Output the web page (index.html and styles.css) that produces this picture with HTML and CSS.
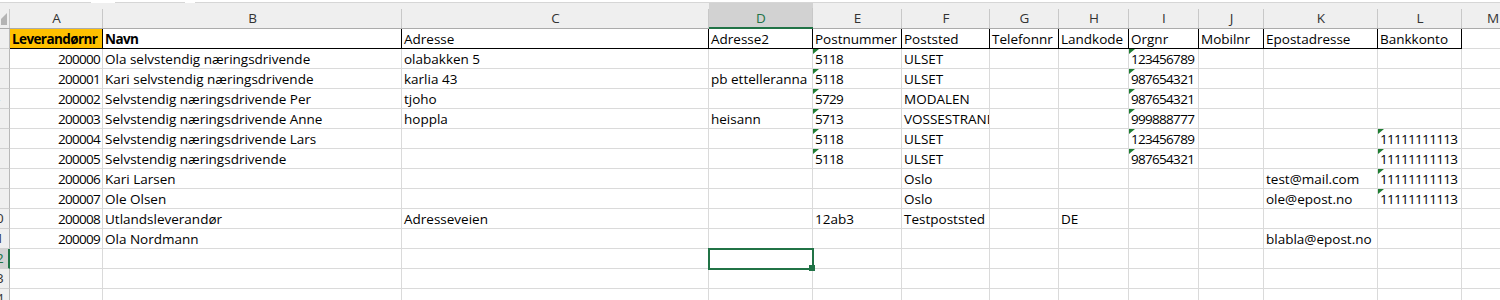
FILE: index.html
```html
<!DOCTYPE html>
<html lang="no">
<head>
  <meta charset="UTF-8">
  <title>Leverandører</title>
  <link rel="stylesheet" href="styles.css">
</head>
<body>
  <div class="topbar">
    <span class="seg s1"></span><span class="gap g1"></span><span class="seg s2"></span><span class="gap g2"></span><span class="seg s3"></span>
  </div>
  <div class="sheet">
    <div class="ch corner"><svg width="9" height="25" viewBox="0 0 9 25"><polygon points="6,10 6,22 -6,22" fill="#b4b4b4"/></svg></div>
    <div class="ch">A</div><div class="ch">B</div><div class="ch">C</div><div class="ch sel">D</div><div class="ch">E</div><div class="ch">F</div><div class="ch">G</div><div class="ch">H</div><div class="ch">I</div><div class="ch">J</div><div class="ch">K</div><div class="ch">L</div><div class="ch">M</div>

    <div class="rh"><span>1</span></div>
    <div class="c t fill b">Leverandørnr</div><div class="c t b">Navn</div><div class="c t">Adresse</div><div class="c t">Adresse2</div><div class="c t">Postnummer</div><div class="c t">Poststed</div><div class="c t">Telefonnr</div><div class="c t">Landkode</div><div class="c t">Orgnr</div><div class="c t">Mobilnr</div><div class="c t">Epostadresse</div><div class="c t">Bankkonto</div><div class="c"></div>

    <div class="rh"><span>2</span></div>
    <div class="c n">200000</div><div class="c">Ola selvstendig næringsdrivende</div><div class="c">olabakken 5</div><div class="c"></div><div class="c e">5118</div><div class="c">ULSET</div><div class="c"></div><div class="c"></div><div class="c e">123456789</div><div class="c"></div><div class="c"></div><div class="c"></div><div class="c"></div>

    <div class="rh"><span>3</span></div>
    <div class="c n">200001</div><div class="c">Kari selvstendig næringsdrivende</div><div class="c">karlia 43</div><div class="c">pb ettelleranna</div><div class="c e">5118</div><div class="c">ULSET</div><div class="c"></div><div class="c"></div><div class="c e">987654321</div><div class="c"></div><div class="c"></div><div class="c"></div><div class="c"></div>

    <div class="rh"><span>4</span></div>
    <div class="c n">200002</div><div class="c">Selvstendig næringsdrivende Per</div><div class="c">tjoho</div><div class="c"></div><div class="c e">5729</div><div class="c">MODALEN</div><div class="c"></div><div class="c"></div><div class="c e">987654321</div><div class="c"></div><div class="c"></div><div class="c"></div><div class="c"></div>

    <div class="rh"><span>5</span></div>
    <div class="c n">200003</div><div class="c">Selvstendig næringsdrivende Anne</div><div class="c">hoppla</div><div class="c">heisann</div><div class="c e">5713</div><div class="c">VOSSESTRAND</div><div class="c"></div><div class="c"></div><div class="c e">999888777</div><div class="c"></div><div class="c"></div><div class="c"></div><div class="c"></div>

    <div class="rh"><span>6</span></div>
    <div class="c n">200004</div><div class="c">Selvstendig næringsdrivende Lars</div><div class="c"></div><div class="c"></div><div class="c e">5118</div><div class="c">ULSET</div><div class="c"></div><div class="c"></div><div class="c e">123456789</div><div class="c"></div><div class="c"></div><div class="c e">11111111113</div><div class="c"></div>

    <div class="rh"><span>7</span></div>
    <div class="c n">200005</div><div class="c">Selvstendig næringsdrivende</div><div class="c"></div><div class="c"></div><div class="c e">5118</div><div class="c">ULSET</div><div class="c"></div><div class="c"></div><div class="c e">987654321</div><div class="c"></div><div class="c"></div><div class="c e">11111111113</div><div class="c"></div>

    <div class="rh"><span>8</span></div>
    <div class="c n">200006</div><div class="c">Kari Larsen</div><div class="c"></div><div class="c"></div><div class="c"></div><div class="c">Oslo</div><div class="c"></div><div class="c"></div><div class="c"></div><div class="c"></div><div class="c">test@mail.com</div><div class="c e">11111111113</div><div class="c"></div>

    <div class="rh"><span>9</span></div>
    <div class="c n">200007</div><div class="c">Ole Olsen</div><div class="c"></div><div class="c"></div><div class="c"></div><div class="c">Oslo</div><div class="c"></div><div class="c"></div><div class="c"></div><div class="c"></div><div class="c">ole@epost.no</div><div class="c e">11111111113</div><div class="c"></div>

    <div class="rh"><span>10</span></div>
    <div class="c n">200008</div><div class="c">Utlandsleverandør</div><div class="c">Adresseveien</div><div class="c"></div><div class="c">12ab3</div><div class="c">Testpoststed</div><div class="c"></div><div class="c">DE</div><div class="c"></div><div class="c"></div><div class="c"></div><div class="c"></div><div class="c"></div>

    <div class="rh"><span>11</span></div>
    <div class="c n">200009</div><div class="c">Ola Nordmann</div><div class="c"></div><div class="c"></div><div class="c"></div><div class="c"></div><div class="c"></div><div class="c"></div><div class="c"></div><div class="c"></div><div class="c">blabla@epost.no</div><div class="c"></div><div class="c"></div>

    <div class="rh sel"><span>12</span></div>
    <div class="c"></div><div class="c"></div><div class="c"></div><div class="c active"></div><div class="c"></div><div class="c"></div><div class="c"></div><div class="c"></div><div class="c"></div><div class="c"></div><div class="c"></div><div class="c"></div><div class="c"></div>

    <div class="rh"><span>13</span></div>
    <div class="c"></div><div class="c"></div><div class="c"></div><div class="c"></div><div class="c"></div><div class="c"></div><div class="c"></div><div class="c"></div><div class="c"></div><div class="c"></div><div class="c"></div><div class="c"></div><div class="c"></div>

    <div class="rh"><span>14</span></div>
    <div class="c"></div><div class="c"></div><div class="c"></div><div class="c"></div><div class="c"></div><div class="c"></div><div class="c"></div><div class="c"></div><div class="c"></div><div class="c"></div><div class="c"></div><div class="c"></div><div class="c"></div>
  </div>
</body>
</html>
```

FILE: styles.css
```css
body {
  margin: 0;
  width: 1500px;
  height: 300px;
  overflow: hidden;
  background: #fff;
  font-family: "Open Sans", "Liberation Sans", sans-serif;
  font-size: 13.5px;
  color: #000;
}

/* strip left over from the formula bar */
.topbar {
  display: flex;
  height: 3px;
}
.seg {
  height: 2px;
  border-bottom: 1px solid #d6d6d6;
}
.s1 { width: 91px; }
.g1 { width: 24px; }
.s2 { width: 70px; }
.g2 { width: 10px; }
.s3 { flex: 1; }

.sheet {
  display: grid;
  grid-template-columns: 10px 93px 299px 307px 104px 89px 88px 69px 70px 70px 65px 114px 84px 62px;
  grid-template-rows: 26px;
  grid-auto-rows: 20px;
  width: 1524px;
}

/* column headers */
.ch {
  box-sizing: border-box;
  padding-top: 6px;
  line-height: 19px;
  text-align: center;
  color: #333;
  background: linear-gradient(#c8c8c8, #c8c8c8) right bottom / 1px 19px no-repeat, #efefef;
  border-bottom: 1px solid #ababab;
}
.ch.sel {
  line-height: 18px;
  color: #217346;
  background: linear-gradient(#c8c8c8, #c8c8c8) right bottom / 1px 19px no-repeat, #d2d2d2;
  border-bottom: 2px solid #217346;
}
.corner {
  padding: 0;
  line-height: 0;
}

/* row headers */
.rh {
  box-sizing: border-box;
  overflow: hidden;
  background: #efefef;
  border-right: 1px solid #b8b8b8;
  border-bottom: 1px solid #d0d0d0;
  color: #333;
  line-height: 19px;
}
.rh span {
  display: block;
  width: 26px;
  margin-left: -17px;
  text-align: center;
}
.rh.sel {
  background: #d2d2d2;
  border-right: 2px solid #217346;
  color: #217346;
}

/* cells */
.c {
  position: relative;
  box-sizing: border-box;
  padding: 2px 2px 0;
  line-height: 17px;
  white-space: nowrap;
  overflow: hidden;
  border-right: 1px solid #dadada;
  border-bottom: 1px solid #dadada;
}
.c.n,
.c.e {
  letter-spacing: -0.7px;
}
.c.n { text-align: right; }
.c.b {
  font-weight: bold;
  letter-spacing: -0.6px;
}
.c.t {
  border-right-color: #000;
  border-bottom-color: #000;
}
.c.fill { background: #ffc000; }

/* number stored as text */
.c.e::before {
  content: "";
  position: absolute;
  top: 0;
  left: 0;
  border-top: 5px solid #1f7d32;
  border-right: 6px solid transparent;
}

.c.active {
  overflow: visible;
  z-index: 2;
  outline: 2px solid #217346;
  outline-offset: -1px;
}
.c.active::after {
  content: "";
  position: absolute;
  right: -3px;
  bottom: -3px;
  width: 6px;
  height: 6px;
  background: #217346;
}
```
